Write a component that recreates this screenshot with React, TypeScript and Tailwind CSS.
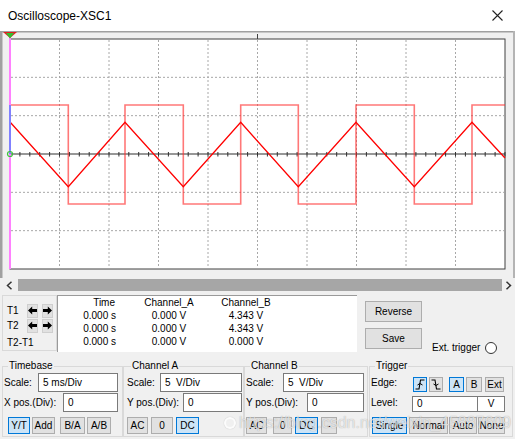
import React from "react";

const VX = Array.from({ length: 9 }, (_, i) => 10 + 49.5 * (i + 1));
const HY = [77.33, 115.67, 192.33, 230.67];
const TICKS = Array.from({ length: 50 }, (_, i) => 10 + 9.9 * (i + 1));
const SQ = [
  [10, 105], [68.3, 105], [68.3, 204], [125, 204], [125, 105], [183.3, 105], [183.3, 204],
  [240.7, 204], [240.7, 105], [298.3, 105], [298.3, 204], [356, 204], [356, 105],
  [414.3, 105], [414.3, 204], [472, 204], [472, 105], [505, 105],
];
const TRI = [
  [10, 122], [68.3, 186.7], [125, 122.3], [183.3, 186.7], [240.7, 122.3], [298.3, 186.7],
  [356, 122.3], [414.3, 186.7], [472, 122.3], [505, 158],
];
const pts = (a: number[][]) => a.map((p) => p.join(",")).join(" ");

function Scope() {
  return (
    <svg width="515" height="247" viewBox="0 31 515 247" className="block">
      <rect x="0" y="31" width="515" height="247" fill="#f0f0f0" />
      <rect x="0" y="31" width="515" height="1.5" fill="#a0a0a0" />
      <rect x="0" y="31" width="2.5" height="247" fill="#a0a0a0" />
      <rect x="513" y="31" width="2" height="247" fill="#b4b4b4" />
      <rect x="10" y="39" width="495" height="230" fill="#ffffff" stroke="#404040" strokeWidth="1" />
      {VX.map((x) => (
        <line key={x} x1={x} y1="40" x2={x} y2="268" stroke="#a8a8a8" strokeWidth="1" strokeDasharray="2 2" />
      ))}
      {HY.map((y) => (
        <line key={y} x1="11" y1={y} x2="504" y2={y} stroke="#a8a8a8" strokeWidth="1" strokeDasharray="2 2" />
      ))}
      <line x1="257.5" y1="34" x2="257.5" y2="39" stroke="#404040" strokeWidth="1" />
      <line x1="10" y1="154" x2="505" y2="154" stroke="#303030" strokeWidth="1.2" />
      {TICKS.map((x) => (
        <line key={x} x1={x} y1="152" x2={x} y2="156.5" stroke="#303030" strokeWidth="1" />
      ))}
      <polyline points={pts(SQ)} fill="none" stroke="#ff3030" strokeOpacity="0.65" strokeWidth="1.6" />
      <polyline points={pts(TRI)} fill="none" stroke="#ff0000" strokeWidth="1.3" />
      <line x1="10" y1="34" x2="10" y2="269" stroke="#ff80ff" strokeWidth="2" />
      <line x1="10" y1="105" x2="10" y2="154" stroke="#8080ff" strokeWidth="2" />
      <circle cx="10" cy="154" r="2.5" fill="none" stroke="#3cc03c" strokeWidth="1.2" />
      <polygon points="3,32 17,32 10,38" fill="#e02020" />
      <polygon points="6,33 14,33 10,38.5" fill="#30c030" />
    </svg>
  );
}

function Btn({ className, sel, children }: { className: string; sel?: boolean; children: React.ReactNode }) {
  return (
    <div
      className={`${className} flex items-center justify-center border ${
        sel ? "bg-[#cce4f7] border-[#0078d7]" : "bg-[#e1e1e1] border-[#adadad]"
      }`}
    >
      {children}
    </div>
  );
}

function Field({ className, children, center }: { className: string; children?: React.ReactNode; center?: boolean }) {
  return (
    <div
      className={`${className} h-full bg-white border border-[#7a7a7a] flex items-center ${
        center ? "justify-center" : "pl-[4px]"
      }`}
    >
      {children}
    </div>
  );
}

function Arrow({ dir }: { dir: "l" | "r" }) {
  return (
    <div className="w-[11px] h-[14px] bg-[#e1e1e1] border border-[#cfcfcf] flex items-center justify-center">
      <svg width="9" height="9" viewBox="0 0 9 9">
        {dir === "l" ? (
          <polygon points="0,4.5 4.2,0.5 4.2,3 9,3 9,6 4.2,6 4.2,8.5" fill="#000" />
        ) : (
          <polygon points="9,4.5 4.8,0.5 4.8,3 0,3 0,6 4.8,6 4.8,8.5" fill="#000" />
        )}
      </svg>
    </div>
  );
}

export default function App() {
  return (
    <div className="w-[515px] h-[439px] bg-[#f0f0f0] overflow-hidden relative font-['Liberation_Sans',Arial,sans-serif] text-[10px] leading-[12px] text-black">
      {/* title bar */}
      <div className="h-[31px] bg-white flex items-center justify-between pl-[8px] pr-[12px]">
        <span className="text-[12px] leading-[14px]">Oscilloscope-XSC1</span>
        <svg width="11" height="11" viewBox="0 0 11 11">
          <path d="M0.5 0.5 L10.5 10.5 M10.5 0.5 L0.5 10.5" stroke="#222" strokeWidth="1.1" />
        </svg>
      </div>

      <Scope />

      {/* scrollbar */}
      <div className="h-[14px] flex items-center">
        <div className="w-[18px] flex justify-center">
          <svg width="7" height="9" viewBox="0 0 7 9">
            <polyline points="5.5,0.8 1.5,4.5 5.5,8.2" fill="none" stroke="#333" strokeWidth="1.5" />
          </svg>
        </div>
        <div className="w-[484px] h-[12px] bg-[#a6a6a6]" />
        <div className="flex-1 flex justify-center">
          <svg width="7" height="9" viewBox="0 0 7 9">
            <polyline points="1.5,0.8 5.5,4.5 1.5,8.2" fill="none" stroke="#333" strokeWidth="1.5" />
          </svg>
        </div>
      </div>

      {/* cursor row */}
      <div className="flex mt-[3px] h-[57px]">
        <div className="ml-[2px] w-[55px] h-[56px] border border-[#d9d9d9] pl-[4px] pt-[7px] flex flex-col">
          <div className="flex items-center h-[15px]">
            <span className="w-[20px]">T1</span>
            <Arrow dir="l" />
            <div className="ml-[4px]">
              <Arrow dir="r" />
            </div>
          </div>
          <div className="flex items-center h-[15px]">
            <span className="w-[20px]">T2</span>
            <Arrow dir="l" />
            <div className="ml-[4px]">
              <Arrow dir="r" />
            </div>
          </div>
          <div className="mt-[4px]">T2-T1</div>
        </div>

        <div className="w-[300px] h-[57px] bg-white border-l border-t border-[#9a9a9a] pl-[12px] flex leading-[13px]">
          <div className="w-[46px] flex flex-col items-end">
            <span className="pr-[1px]">Time</span>
            <span>0.000 s</span>
            <span>0.000 s</span>
            <span>0.000 s</span>
          </div>
          <div className="ml-[14px] w-[78px] flex flex-col items-center">
            <span>Channel_A</span>
            <span>0.000 V</span>
            <span>0.000 V</span>
            <span>0.000 V</span>
          </div>
          <div className="w-[76px] flex flex-col items-center">
            <span>Channel_B</span>
            <span>4.343 V</span>
            <span>4.343 V</span>
            <span>0.000 V</span>
          </div>
        </div>

        <div className="ml-[8px] mt-[6px] flex flex-col gap-[6px]">
          <Btn className="w-[57px] h-[21px]">Reverse</Btn>
          <Btn className="w-[57px] h-[21px]">Save</Btn>
        </div>

        <div className="ml-[10px] mt-[47px] h-[12px] flex items-center">
          <span>Ext. trigger</span>
          <div className="ml-[5px] w-[12px] h-[12px] rounded-full border border-[#333] bg-white" />
        </div>
      </div>

      {/* groups */}
      <div className="flex mt-[8px] h-[77px]">
        <fieldset className="ml-[2px] w-[121px] h-[77px] border border-[#d9d9d9]">
          <legend className="ml-[5px] px-[1px] leading-[12px]">Timebase</legend>
          <div className="flex items-center mt-[1px] h-[19px]">
            <span className="w-[35px] pl-[1px]">Scale:</span>
            <Field className="w-[80px]">5 ms/Div</Field>
          </div>
          <div className="flex items-center mt-[1px] h-[19px]">
            <span className="w-[60px] pl-[1px]">X pos.(Div):</span>
            <Field className="w-[55px]">0</Field>
          </div>
          <div className="flex mt-[5px] h-[17px]">
            <div className="ml-[5px]">
              <Btn className="w-[22px] h-[17px]" sel>Y/T</Btn>
            </div>
            <div className="ml-[2px]">
              <Btn className="w-[23px] h-[17px]">Add</Btn>
            </div>
            <div className="ml-[5px]">
              <Btn className="w-[25px] h-[17px]">B/A</Btn>
            </div>
            <div className="ml-[2px]">
              <Btn className="w-[24px] h-[17px]">A/B</Btn>
            </div>
          </div>
        </fieldset>

        <fieldset className="w-[121px] h-[77px] border border-[#d9d9d9]">
          <legend className="ml-[7px] px-[1px] leading-[12px]">Channel A</legend>
          <div className="flex items-center mt-[1px] h-[19px]">
            <span className="w-[36px] pl-[3px]">Scale:</span>
            <Field className="w-[82px]">5&nbsp;&nbsp;V/Div</Field>
          </div>
          <div className="flex items-center mt-[1px] h-[19px]">
            <span className="w-[59px] pl-[3px]">Y pos.(Div):</span>
            <Field className="w-[59px]">0</Field>
          </div>
          <div className="flex mt-[5px] h-[17px]">
            <div className="ml-[3px]">
              <Btn className="w-[21px] h-[17px]">AC</Btn>
            </div>
            <div className="ml-[3px]">
              <Btn className="w-[22px] h-[17px]">0</Btn>
            </div>
            <div className="ml-[3px]">
              <Btn className="w-[23px] h-[17px]" sel>DC</Btn>
            </div>
          </div>
        </fieldset>

        <fieldset className="w-[124px] h-[77px] border border-[#d9d9d9]">
          <legend className="ml-[5px] px-[1px] leading-[12px]">Channel B</legend>
          <div className="flex items-center mt-[1px] h-[19px]">
            <span className="w-[38px] pl-[1px]">Scale:</span>
            <Field className="w-[81px]">5&nbsp;&nbsp;V/Div</Field>
          </div>
          <div className="flex items-center mt-[1px] h-[19px]">
            <span className="w-[62px] pl-[1px]">Y pos.(Div):</span>
            <Field className="w-[57px]">0</Field>
          </div>
          <div className="flex mt-[5px] h-[17px]">
            <div className="ml-[1px]">
              <Btn className="w-[21px] h-[17px]">AC</Btn>
            </div>
            <div className="ml-[6px]">
              <Btn className="w-[19px] h-[17px]">0</Btn>
            </div>
            <div className="ml-[3px]">
              <Btn className="w-[23px] h-[17px]" sel>DC</Btn>
            </div>
            <div className="ml-[3px]">
              <Btn className="w-[16px] h-[17px]">-</Btn>
            </div>
          </div>
        </fieldset>

        <fieldset className="ml-[1px] w-[144px] h-[77px] border border-[#d9d9d9]">
          <legend className="ml-[5px] px-[1px] leading-[12px]">Trigger</legend>
          <div className="flex items-end mt-[1px] h-[19px]">
            <span className="w-[43px] pl-[1px] self-center">Edge:</span>
            <Btn className="w-[14px] h-[15px]" sel>
              <svg width="10" height="11" viewBox="0 0 10 11">
                <path d="M0.5 10 H4 L5.5 1 H9.5" fill="none" stroke="#000" strokeWidth="1.1" />
                <path d="M2.5 6 L5 4.5 L7.5 6" fill="none" stroke="#000" strokeWidth="1" />
              </svg>
            </Btn>
            <div className="ml-[2px]">
              <Btn className="w-[14px] h-[15px]">
                <svg width="10" height="11" viewBox="0 0 10 11">
                  <path d="M0.5 1 H4 L5.5 10 H9.5" fill="none" stroke="#000" strokeWidth="1.1" />
                  <path d="M2.5 5 L5 6.5 L7.5 5" fill="none" stroke="#000" strokeWidth="1" />
                </svg>
              </Btn>
            </div>
            <div className="ml-[6px]">
              <Btn className="w-[15px] h-[15px]" sel>A</Btn>
            </div>
            <div className="ml-[2px]">
              <Btn className="w-[16px] h-[15px]">B</Btn>
            </div>
            <div className="ml-[3px]">
              <Btn className="w-[19px] h-[15px]">Ext</Btn>
            </div>
          </div>
          <div className="flex items-end mt-[1px] h-[19px]">
            <span className="w-[42px] pl-[1px] self-center">Level:</span>
            <div className="h-[16px] flex">
              <Field className="w-[66px]">0</Field>
              <Field className="w-[27px] border-l-0" center>V</Field>
            </div>
          </div>
          <div className="flex mt-[5px] h-[17px]">
            <div className="ml-[2px]">
              <Btn className="w-[35px] h-[17px]" sel>Single</Btn>
            </div>
            <div className="ml-[2px]">
              <Btn className="w-[39px] h-[17px]">Normal</Btn>
            </div>
            <div className="ml-[1px]">
              <Btn className="w-[28px] h-[17px]">Auto</Btn>
            </div>
            <div className="ml-[1px]">
              <Btn className="w-[27px] h-[17px]">None</Btn>
            </div>
          </div>
        </fieldset>
      </div>

      {/* watermark */}
      <div className="absolute left-[224px] top-[414px] flex items-center gap-[3px] text-[16px] leading-[18px] text-white/70 [text-shadow:0_0_1px_rgba(0,0,0,0.35)] pointer-events-none">
        <div className="w-[12px] h-[12px] rounded-full border-[2px] border-white/80 shadow-[0_0_1px_rgba(0,0,0,0.3)]" />
        <span>https://blog.csdn.net/weixin_45887609</span>
      </div>
    </div>
  );
}
